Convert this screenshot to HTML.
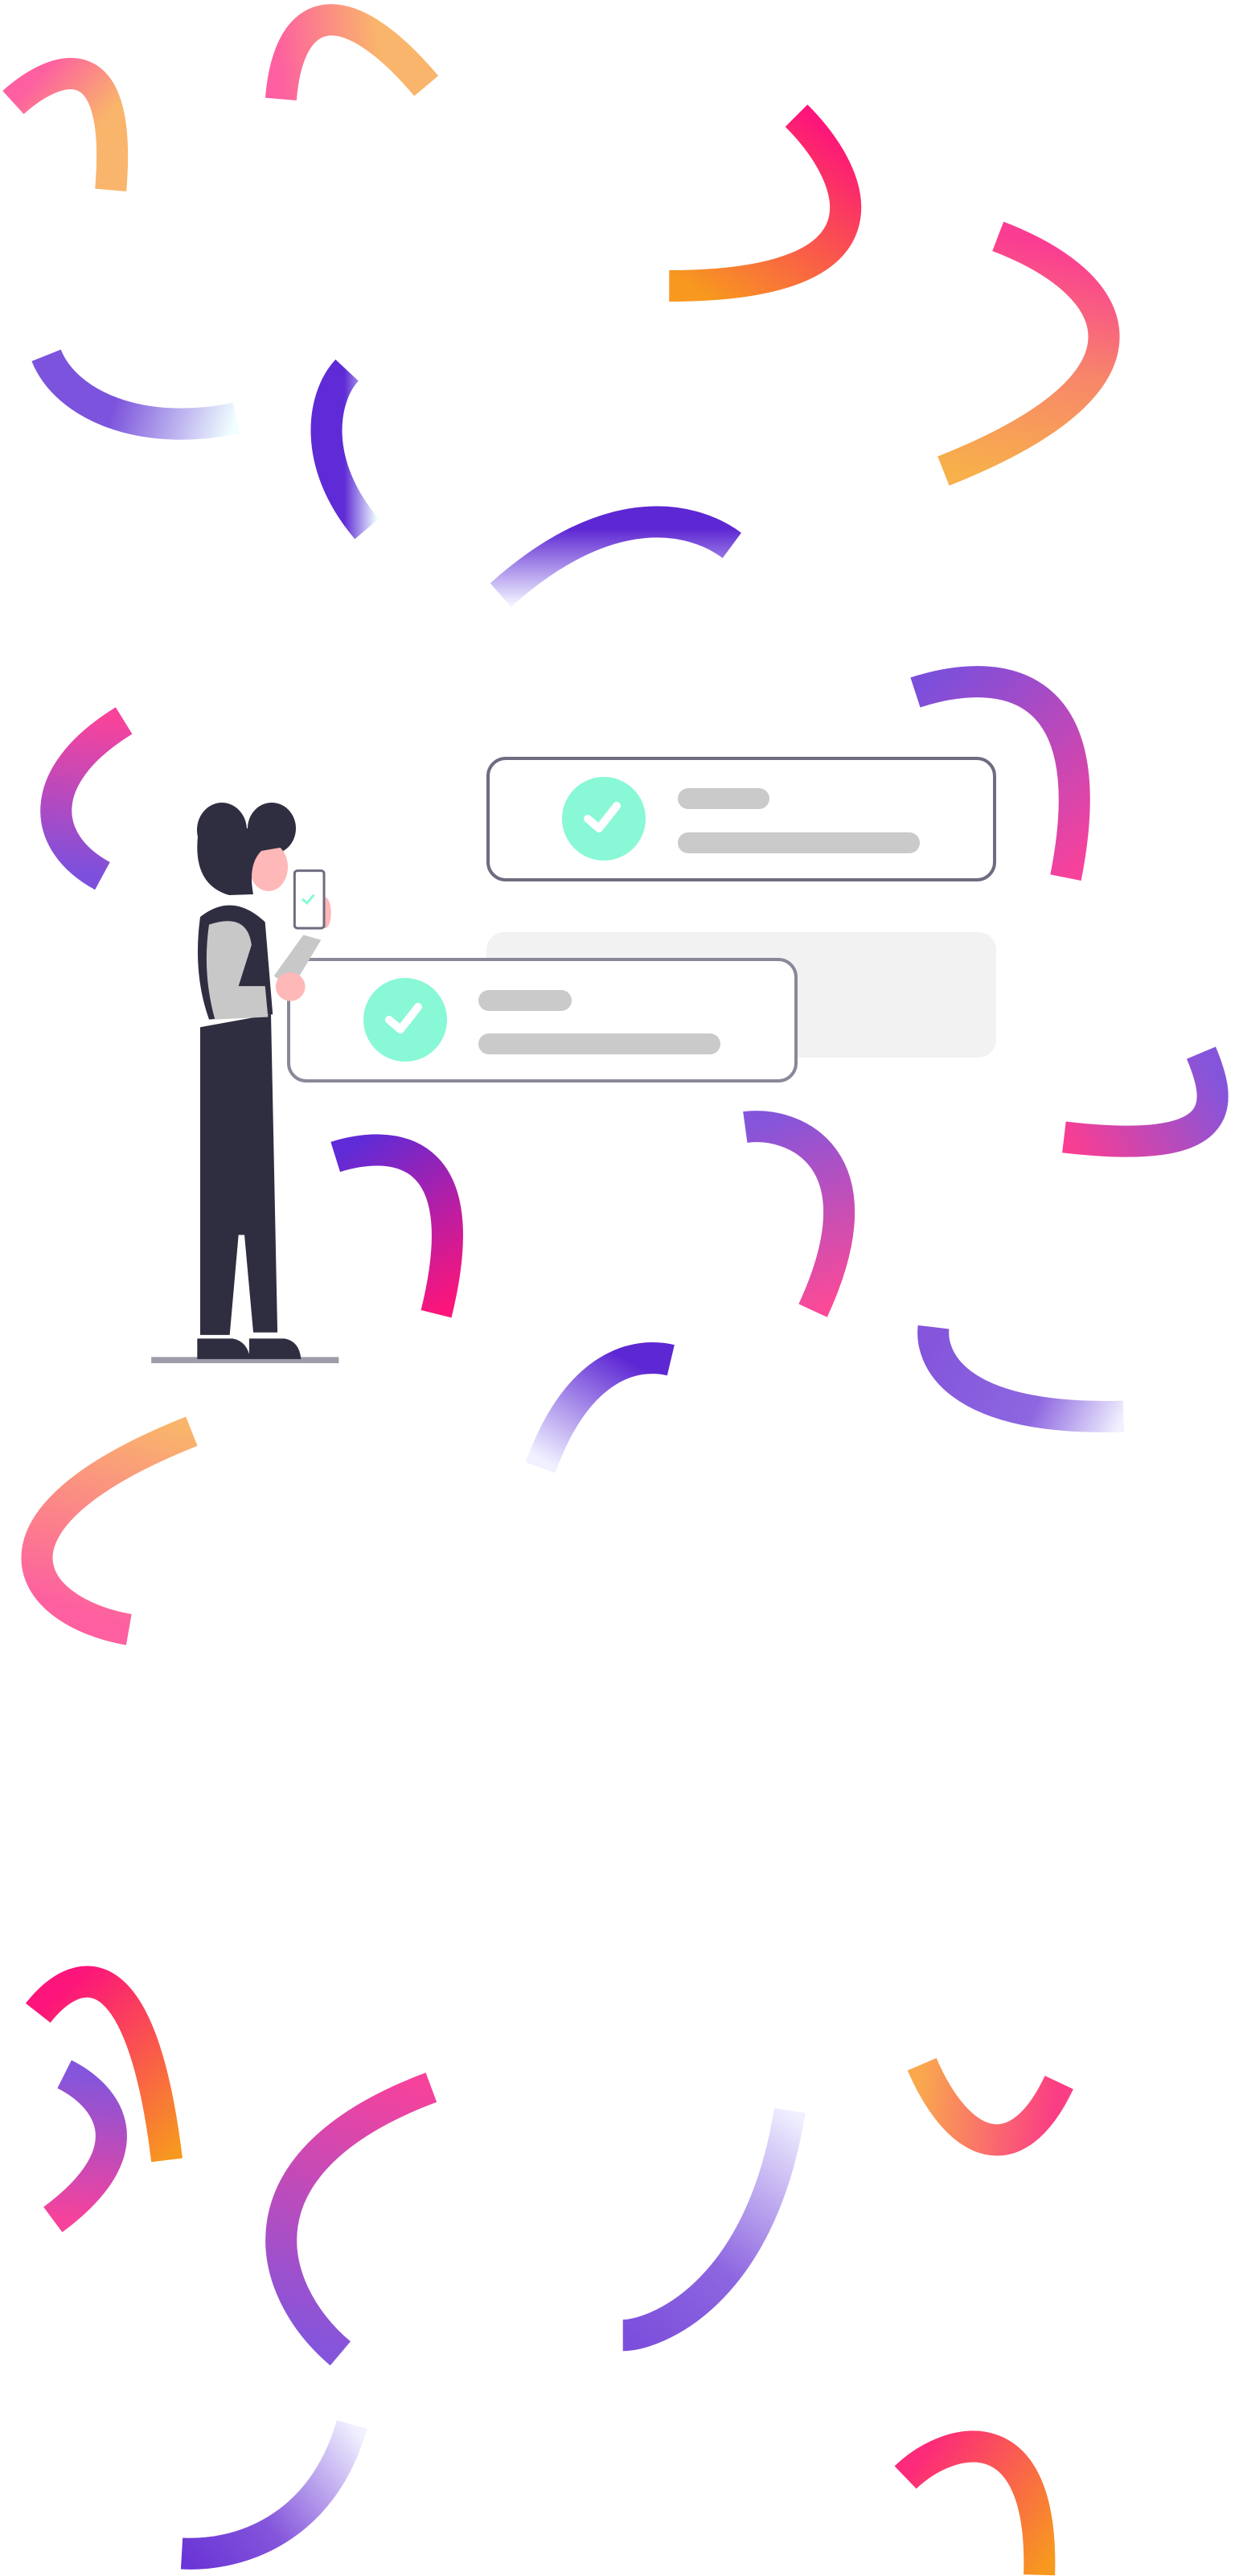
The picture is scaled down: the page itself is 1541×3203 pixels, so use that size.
<!DOCTYPE html>
<html><head><meta charset="utf-8"><style>
html,body{margin:0;padding:0;background:#fff;width:1541px;height:3203px;overflow:hidden}
svg{display:block}
</style></head><body>
<svg width="1541" height="3203" viewBox="0 0 1541 3203" xmlns="http://www.w3.org/2000/svg">
<defs>
<linearGradient id="g1" gradientUnits="userSpaceOnUse" x1="8" y1="62" x2="67" y2="115"><stop offset="0" stop-color="#fd5fa0"/><stop offset="0.6" stop-color="#f9b56b"/></linearGradient>
<linearGradient id="g2" gradientUnits="userSpaceOnUse" x1="170" y1="60" x2="258" y2="52"><stop offset="0" stop-color="#fd5fa0"/><stop offset="0.7" stop-color="#f9b56b"/></linearGradient>
<linearGradient id="g3" gradientUnits="userSpaceOnUse" x1="490" y1="70" x2="420" y2="175"><stop offset="0" stop-color="#fc157a"/><stop offset="1" stop-color="#f7981f"/></linearGradient>
<linearGradient id="g4" gradientUnits="userSpaceOnUse" x1="604" y1="143" x2="575" y2="285"><stop offset="0" stop-color="#fa3d92"/><stop offset="0.5" stop-color="#f7866a"/><stop offset="1" stop-color="#f7b04a"/></linearGradient>
<linearGradient id="g5" gradientUnits="userSpaceOnUse" x1="28" y1="215" x2="143" y2="253"><stop offset="0.4" stop-color="#7c53dc"/><stop offset="1" stop-color="#f0ffff"/></linearGradient>
<linearGradient id="g6" gradientUnits="userSpaceOnUse" x1="200" y1="270" x2="228" y2="270"><stop offset="0.3" stop-color="#5f2bd6"/><stop offset="1" stop-color="#f0ffff"/></linearGradient>
<linearGradient id="g7" gradientUnits="userSpaceOnUse" x1="380" y1="315" x2="380" y2="365"><stop offset="0.1" stop-color="#5d27d3"/><stop offset="1" stop-color="#f0f0ff"/></linearGradient>
<linearGradient id="g8" gradientUnits="userSpaceOnUse" x1="75" y1="436" x2="62" y2="530"><stop offset="0" stop-color="#f8439b"/><stop offset="1" stop-color="#7d50dc"/></linearGradient>
<linearGradient id="g9" gradientUnits="userSpaceOnUse" x1="554" y1="419" x2="645" y2="531"><stop offset="0" stop-color="#7c4fdb"/><stop offset="1" stop-color="#f7429b"/></linearGradient>
<linearGradient id="g10" gradientUnits="userSpaceOnUse" x1="727" y1="637" x2="644" y2="688"><stop offset="0" stop-color="#8455db"/><stop offset="1" stop-color="#fa3d92"/></linearGradient>
<linearGradient id="g11" gradientUnits="userSpaceOnUse" x1="203" y1="700" x2="264" y2="795"><stop offset="0" stop-color="#5f2bd6"/><stop offset="0.5" stop-color="#b01fa8"/><stop offset="1" stop-color="#fc157a"/></linearGradient>
<linearGradient id="g12" gradientUnits="userSpaceOnUse" x1="451" y1="682" x2="492" y2="793"><stop offset="0" stop-color="#8455db"/><stop offset="1" stop-color="#fa4a98"/></linearGradient>
<linearGradient id="g13" gradientUnits="userSpaceOnUse" x1="565" y1="803" x2="680" y2="857"><stop offset="0" stop-color="#8455db"/><stop offset="0.6" stop-color="#8d66e0"/><stop offset="1" stop-color="#f0f0ff"/></linearGradient>
<linearGradient id="g14" gradientUnits="userSpaceOnUse" x1="380" y1="823" x2="340" y2="890"><stop offset="0" stop-color="#5d27d3"/><stop offset="1" stop-color="#f0f0ff"/></linearGradient>
<linearGradient id="g15" gradientUnits="userSpaceOnUse" x1="116" y1="866" x2="78" y2="986"><stop offset="0" stop-color="#f9b56b"/><stop offset="1" stop-color="#fd5fa0"/></linearGradient>
<linearGradient id="g16" gradientUnits="userSpaceOnUse" x1="23" y1="1218" x2="101" y2="1307"><stop offset="0" stop-color="#fc157a"/><stop offset="1" stop-color="#f7981f"/></linearGradient>
<linearGradient id="g17" gradientUnits="userSpaceOnUse" x1="39" y1="1255" x2="32" y2="1343"><stop offset="0" stop-color="#8455db"/><stop offset="1" stop-color="#f7429b"/></linearGradient>
<linearGradient id="g18" gradientUnits="userSpaceOnUse" x1="261" y1="1263" x2="206" y2="1424"><stop offset="0" stop-color="#f7429b"/><stop offset="1" stop-color="#8455db"/></linearGradient>
<linearGradient id="g19" gradientUnits="userSpaceOnUse" x1="478" y1="1277" x2="377" y2="1413"><stop offset="0" stop-color="#f0f0ff"/><stop offset="0.6" stop-color="#8d66e0"/><stop offset="1" stop-color="#7c4fdb"/></linearGradient>
<linearGradient id="g20" gradientUnits="userSpaceOnUse" x1="558" y1="1249" x2="641" y2="1260"><stop offset="0" stop-color="#f9a84e"/><stop offset="1" stop-color="#fa3d85"/></linearGradient>
<linearGradient id="g21" gradientUnits="userSpaceOnUse" x1="213" y1="1467" x2="110" y2="1545"><stop offset="0" stop-color="#f0f0ff"/><stop offset="0.6" stop-color="#8455db"/><stop offset="1" stop-color="#6a35d6"/></linearGradient>
<linearGradient id="g22" gradientUnits="userSpaceOnUse" x1="548" y1="1499" x2="629" y2="1558"><stop offset="0" stop-color="#fc2a7a"/><stop offset="1" stop-color="#f7981f"/></linearGradient>
</defs>
<g transform="scale(2.055)" fill="none" stroke-width="19">
<path d="M8,62 C30,42 75,20 67,115" stroke="url(#g1)"/>
<path d="M170,60 C175,0 210,-5 258,52" stroke="url(#g2)"/>
<path d="M482,70 C520,108 545,173 405,173" stroke="url(#g3)"/>
<path d="M604,143 C680,172 710,230 571,285" stroke="url(#g4)"/>
<path d="M28,215 C40,245 85,265 143,253" stroke="url(#g5)"/>
<path d="M210,224 C195,240 188,280 222,320" stroke="url(#g6)"/>
<path d="M443,330 C420,313 370,300 303,360" stroke="url(#g7)"/>
<path d="M75,436 C20,470 25,510 62,530" stroke="url(#g8)"/>
<path d="M554,419 C600,404 670,405 645,531" stroke="url(#g9)"/>
<path d="M727,637 C740,668 745,700 644,688" stroke="url(#g10)"/>
<path d="M203,700 C235,690 290,690 264,795" stroke="url(#g11)"/>
<path d="M451,682 C480,678 535,700 492,793" stroke="url(#g12)"/>
<path d="M565,803 C563,820 575,860 680,857" stroke="url(#g13)"/>
<path d="M406,823 C385,818 350,825 327,888" stroke="url(#g14)"/>
<path d="M116,866 C-20,920 15,975 78,986" stroke="url(#g15)"/>
<path d="M23,1218 C45,1190 85,1175 101,1307" stroke="url(#g16)"/>
<path d="M39,1255 C65,1268 90,1300 32,1343" stroke="url(#g17)"/>
<path d="M261,1263 C140,1308 160,1385 206,1424" stroke="url(#g18)"/>
<path d="M478,1277 C460,1390 395,1413 377,1413" stroke="url(#g19)"/>
<path d="M558,1249 C580,1300 615,1315 641,1260" stroke="url(#g20)"/>
<path d="M213,1467 C195,1530 145,1547 110,1545" stroke="url(#g21)"/>
<path d="M548,1499 C575,1473 632,1460 629,1558" stroke="url(#g22)"/>
</g>
<!-- cards -->
<rect x="605" y="1159" width="634" height="156" rx="22" fill="#f2f2f2"/>
<rect x="607" y="943" width="630" height="151" rx="22" fill="#fff" stroke="#6f6b80" stroke-width="4"/>
<circle cx="751" cy="1018" r="52" fill="#88f8d6"/>
<path d="M731,1018 l14,12 l22,-28" fill="none" stroke="#fff" stroke-width="10" stroke-linecap="round" stroke-linejoin="round"/>
<rect x="843" y="980" width="114" height="26" rx="13" fill="#cacaca"/>
<rect x="843" y="1035" width="301" height="26" rx="13" fill="#cacaca"/>
<rect x="359" y="1193" width="631" height="151" rx="22" fill="#fff" stroke="#8a8898" stroke-width="4"/>
<circle cx="504" cy="1268" r="52" fill="#88f8d6"/>
<path d="M484,1268 l14,12 l22,-28" fill="none" stroke="#fff" stroke-width="10" stroke-linecap="round" stroke-linejoin="round"/>
<rect x="595" y="1231" width="116" height="26" rx="13" fill="#cacaca"/>
<rect x="595" y="1285" width="301" height="26" rx="13" fill="#cacaca"/>
<!-- person (zoom coords) -->
<g transform="translate(150,700) scale(0.7334,0.6378)">
<rect x="52" y="1548" width="318" height="12" fill="#9e9cab"/>
<path d="M135,905 L255,880 L266,1500 L225,1500 L210,1310 L200,1310 L185,1505 L135,1505 Z" fill="#2f2e41"/>
<path d="M130,1512 h60 q25,5 30,40 h-90 Z M218,1512 h60 q25,5 28,40 h-88 Z" fill="#2f2e41"/>
<path d="M135,690 Q190,640 245,700 L258,880 L150,890 Q122,800 135,690 Z" fill="#2f2e41"/>
<path d="M260,805 L310,725 L340,735 L290,830 Z" fill="#c8c8c8"/>
<path d="M150,705 Q215,680 222,745 L200,825 L245,825 L250,885 L160,890 Q138,800 150,705 Z" fill="#c8c8c8"/>
<ellipse cx="288" cy="826" rx="25" ry="28" fill="#ffb8b8"/>
<ellipse cx="347" cy="682" rx="10" ry="30" fill="#ffb8b8"/>
<rect x="295" y="600" width="50" height="112" rx="5" fill="#fff" stroke="#6f6b80" stroke-width="3" vector-effect="non-scaling-stroke"/>
<path d="M308,655 l8,8 l12,-16" fill="none" stroke="#88f8d6" stroke-width="3" vector-effect="non-scaling-stroke"/>
</g>
<!-- head (real coords) -->
<ellipse cx="276" cy="1032" rx="31" ry="34" fill="#2f2e41"/>
<ellipse cx="338" cy="1030" rx="30" ry="32" fill="#2f2e41"/>
<ellipse cx="334" cy="1078" rx="24" ry="30" fill="#ffb8b8"/>
<path d="M246,1040 Q240,1100 285,1113 L315,1112 Q308,1075 325,1058 L360,1052 L355,1030 L260,1030 Z" fill="#2f2e41"/>
</svg>
</body></html>
